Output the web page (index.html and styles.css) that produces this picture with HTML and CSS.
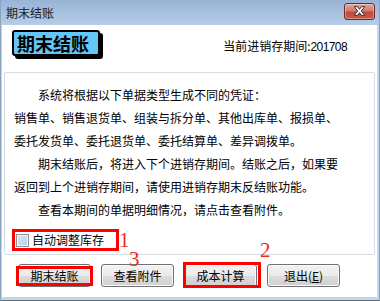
FILE: index.html
```html
<!DOCTYPE html>
<html lang="zh-CN">
<head>
<meta charset="utf-8">
<title>期末结账</title>
<link rel="stylesheet" href="styles.css">
</head>
<body>
<div class="window">
  <div class="titlebar">
    <span class="title">期末结账</span>
    <span class="close">
      <svg width="30" height="16" viewBox="0 0 30 16">
        <path d="M9.5 3.5 L13 3.5 L15 6.3 L17 3.5 L20.5 3.5 L16.8 8 L20.5 12.5 L17 12.5 L15 9.7 L13 12.5 L9.5 12.5 L13.2 8 Z" fill="#fff" stroke="#3a2a2a" stroke-width="1" stroke-linejoin="round"/>
      </svg>
    </span>
  </div>
  <div class="client">
    <div class="header">
      <div class="badge">期末结账</div>
      <div class="period">当前进销存期间:<span class="num">201708</span></div>
    </div>
    <div class="group">
      <p class="indent">系统将根据以下单据类型生成不同的凭证：</p>
      <p>销售单、销售退货单、组装与拆分单、其他出库单、报损单、</p>
      <p>委托发货单、委托退货单、委托结算单、差异调拨单。</p>
      <p class="indent">期末结账后，将进入下个进销存期间。结账之后，如果要</p>
      <p>返回到上个进销存期间，请使用进销存期末反结账功能。</p>
      <p class="indent">查看本期间的单据明细情况，请点击查看附件。</p>
      <label class="auto"><span class="cb"></span>自动调整库存</label>
    </div>
    <div class="buttons">
      <button class="btn mark-a">期末结账</button>
      <button class="btn">查看附件</button>
      <button class="btn mark-b">成本计算</button>
      <button class="btn">退出(<u>E</u>)</button>
    </div>
  </div>
  <span class="note n1">1</span>
  <span class="note n2">2</span>
  <span class="note n3">3</span>
</div>
</body>
</html>
```
FILE: styles.css
```css
html, body {
  margin: 0;
  padding: 0;
  background: #ffffff;
}
body {
  font-family: "Noto Sans CJK SC", "Noto Sans", sans-serif;
  font-size: 12px;
  color: #000;
}
.window {
  position: relative;
  width: 380px;
  height: 301px;
  box-sizing: border-box;
  display: flex;
  flex-direction: column;
  background: #c3d7ec;
  border-left: 1px solid #8aa3c0;
  border-right: 1px solid #8aa3c0;
  border-bottom: 1px solid #5d6e80;
}
.titlebar {
  height: 25px;
  flex: none;
  display: flex;
  align-items: center;
  justify-content: space-between;
  padding: 0 4px 0 5px;
  background: linear-gradient(#98b3d5, #b6cde7);
}
.title {
  font-size: 12px;
  color: #1a1a1a;
  line-height: 12px;
  margin-top: 1px;
}
.close {
  width: 29px;
  height: 15px;
  margin-top: -3px;
  border: 1px solid #6b2a28;
  border-radius: 3px;
  background: linear-gradient(#e5a59c 0%, #d07a6e 45%, #c0493a 55%, #c75a45 100%);
  display: flex;
  align-items: center;
  justify-content: center;
  box-shadow: inset 0 0 0 1px rgba(255,255,255,0.35);
}
.close svg { display: block; }
.client {
  flex: 1;
  margin: 0 2px 3px 1px;
  background: #ffffff;
  display: flex;
  flex-direction: column;
}
.header {
  height: 47px;
  flex: none;
  display: flex;
  align-items: flex-start;
  padding: 5px 30px 0 10px;
  box-sizing: border-box;
}
.badge {
  width: 81px;
  height: 22px;
  border: 2px solid #000;
  border-radius: 3px;
  background: #62c7f6;
  box-shadow: 3px 3px 0 #000;
  font-size: 18px;
  font-weight: bold;
  line-height: 22px;
  padding-left: 3px;
}
.period {
  margin-left: auto;
  margin-top: 9px;
  line-height: 14px;
}
.num {
  font-family: "Liberation Sans", sans-serif;
  letter-spacing: -0.6px;
}
.group {
  flex: none;
  height: 183px;
  box-sizing: border-box;
  margin: 0 2px 0 2px;
  border: 1px solid #d5dde5;
  border-radius: 2px;
  padding: 10px 0 0 9px;
  display: flex;
  flex-direction: column;
  align-items: flex-start;
}
.group p {
  margin: 0;
  line-height: 23px;
  white-space: nowrap;
}
.group p.indent {
  padding-left: 24px;
}
.auto {
  margin-top: 8px;
  margin-left: -2px;
  height: 16px;
  border: 3px solid #ff0000;
  padding: 0 12px 0 1px;
  display: flex;
  align-items: center;
  gap: 3px;
  line-height: 16px;
}
.cb {
  width: 11px;
  height: 11px;
  border: 1px solid #8f8f8f;
  background: linear-gradient(135deg, #d6e7f6, #b8d2ec);
  box-shadow: inset 0 0 0 1px #f4f8fc;
}
.buttons {
  display: flex;
  gap: 10px;
  padding: 9px 0 0 16px;
}
.btn {
  position: relative;
  width: 73px;
  height: 23px;
  padding: 0;
  font-family: inherit;
  font-size: 12px;
  color: #000;
  border: 1px solid #707070;
  border-radius: 3px;
  background: linear-gradient(#f2f2f2 0%, #ebebeb 50%, #dddddd 51%, #cfcfcf 100%);
  box-shadow: inset 0 0 0 1px #fbfbfb;
}
.btn u {
  text-decoration: underline;
}
.mark-a::after,
.mark-b::after {
  content: "";
  position: absolute;
  border: 3px solid #ff0000;
}
.mark-a::after {
  left: -3px;
  right: -3px;
  top: 1px;
  bottom: 0;
}
.mark-b::after {
  left: -2px;
  right: -5px;
  top: -3px;
  bottom: -2px;
}
.note {
  position: absolute;
  font-family: "Liberation Serif", serif;
  font-size: 21px;
  line-height: 14px;
  height: 14px;
  color: #ee2a1e;
}
.n1 { left: 118px; top: 233px; }
.n2 { left: 259px; top: 243px; }
.n3 { left: 128px; top: 252px; }
```
